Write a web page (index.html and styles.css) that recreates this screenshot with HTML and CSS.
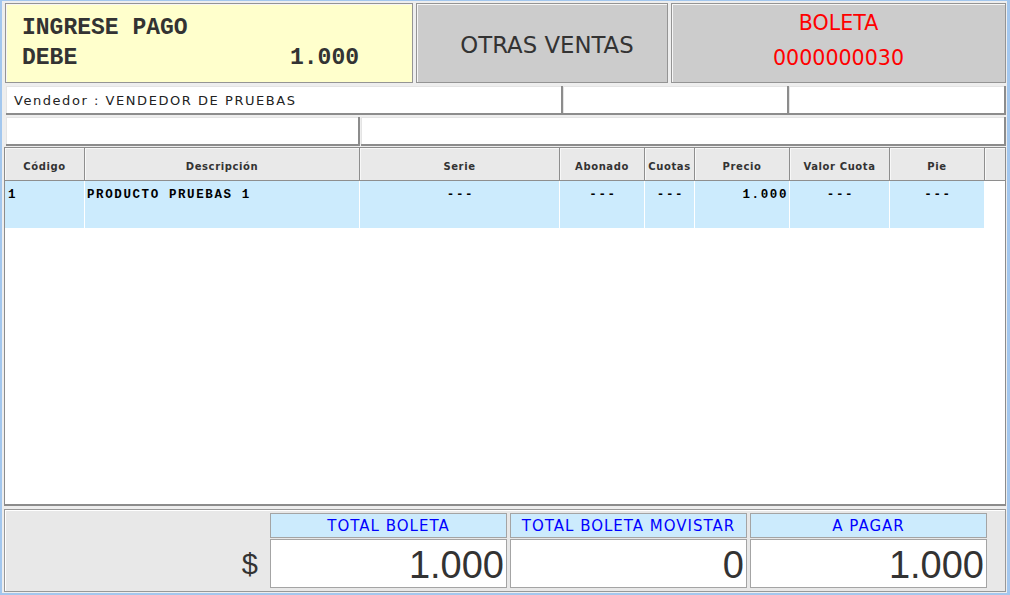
FILE: index.html
```html
<!DOCTYPE html>
<html lang="es">
<head>
<meta charset="utf-8">
<title>Pago</title>
<link rel="stylesheet" href="styles.css">
</head>
<body>
<div class="win">
  <div class="top">
    <div class="panel pay">
      <div class="pay-line">INGRESE PAGO</div>
      <div class="pay-line pay-debe"><span>DEBE</span><span>1.000</span></div>
    </div>
    <div class="panel other">OTRAS VENTAS</div>
    <div class="panel doc">
      <div class="doc-line">BOLETA</div>
      <div class="doc-line">0000000030</div>
    </div>
  </div>

  <div class="row">
    <div class="field f-vend">Vendedor : VENDEDOR DE PRUEBAS</div>
    <div class="field f-mid"></div>
    <div class="field f-grow"></div>
  </div>
  <div class="row row3">
    <div class="field f-left"></div>
    <div class="field f-grow"></div>
  </div>

  <div class="table">
    <div class="thead">
      <div class="th">Código</div>
      <div class="th">Descripción</div>
      <div class="th">Serie</div>
      <div class="th">Abonado</div>
      <div class="th">Cuotas</div>
      <div class="th">Precio</div>
      <div class="th">Valor Cuota</div>
      <div class="th">Pie</div>
      <div class="th th-fill"></div>
    </div>
    <div class="trow">
      <div class="td left">1</div>
      <div class="td desc">PRODUCTO PRUEBAS 1</div>
      <div class="td center">---</div>
      <div class="td center">---</div>
      <div class="td center">---</div>
      <div class="td right">1.000</div>
      <div class="td center">---</div>
      <div class="td center">---</div>
    </div>
  </div>

  <div class="totals">
    <div class="dollar">$</div>
    <div class="tot">
      <div class="tot-label">TOTAL BOLETA</div>
      <div class="tot-value">1.000</div>
    </div>
    <div class="tot">
      <div class="tot-label">TOTAL BOLETA MOVISTAR</div>
      <div class="tot-value">0</div>
    </div>
    <div class="tot">
      <div class="tot-label">A PAGAR</div>
      <div class="tot-value">1.000</div>
    </div>
  </div>
</div>
</body>
</html>
```

FILE: styles.css
```css
* { box-sizing: border-box; }
html, body { margin: 0; padding: 0; }
body {
  width: 1010px;
  height: 595px;
  overflow: hidden;
  font-family: "DejaVu Sans", "Liberation Sans", sans-serif;
  background: #eeeeee;
}
.win {
  width: 1010px;
  height: 595px;
  background: #eeeeee;
  border-top: 1px solid #a3c7ee;
  border-left: 2px solid #a3c7ee;
  border-right: 3px solid #a3c7ee;
  border-bottom: 2px solid #a3c7ee;
  padding: 0 1px 0 2px;
  display: flex;
  flex-direction: column;
}

/* top panels */
.top {
  margin-top: 2px;
  margin-left: 1px;
  height: 80px;
  display: flex;
  gap: 3px;
}
.panel {
  border: 1px solid #949494;
  box-shadow: inset 1px 1px 0 #f6f6f6;
}
.pay {
  width: 408px;
  background: #ffffcc;
  padding: 9px 53px 0 16px;
  font-family: "Liberation Mono", "Courier New", monospace;
  font-weight: bold;
  font-size: 23px;
  line-height: 30px;
  color: #333333;
}
.pay-debe {
  display: flex;
  justify-content: space-between;
}
.other {
  width: 252px;
  background: #cccccc;
  display: flex;
  align-items: center;
  justify-content: center;
  padding: 3px 0 0 10px;
  font-size: 22.8px;
  color: #333333;
}
.doc {
  flex: 1;
  background: #cccccc;
  padding-top: 2px;
  text-align: center;
  font-size: 20.6px;
  line-height: 35px;
  color: #ff0000;
}

/* field rows */
.row {
  margin-top: 3px;
  margin-left: 2px;
  height: 29px;
  display: flex;
}
.row3 { margin-top: 2px; }
.field {
  background: #ffffff;
  border-right: 2px solid #8c8c8c;
  border-bottom: 2px solid #8c8c8c;
  box-shadow: inset 1px 1px 0 #e4e4e4;
}
.f-vend {
  width: 557px;
  padding: 1px 0 0 8px;
  font-size: 13px;
  line-height: 27px;
  letter-spacing: 1.55px;
  color: #222222;
  white-space: nowrap;
}
.f-mid { width: 226px; }
.f-left { width: 354px; margin-right: 1px; }
.f-grow { flex: 1; }

/* table */
.table {
  margin-top: 1px;
  height: 359px;
  background: #ffffff;
  border: 1px solid #8c8c8c;
  border-bottom-width: 2px;
}
.thead, .trow {
  display: grid;
  grid-template-columns: 80px 275px 200px 85px 50px 95px 100px 95px 20px;
}
.th {
  height: 33px;
  background: #e9e9e9;
  border-right: 1px solid #8e8e8e;
  border-bottom: 1px solid #8e8e8e;
  box-shadow: inset 1px 1px 0 #f8f8f8;
  padding-top: 13px;
  text-align: center;
  font-size: 10px;
  font-weight: bold;
  line-height: 12px;
  letter-spacing: 0.6px;
  color: #333333;
  white-space: nowrap;
}
.th-fill { border-right: none; }
.trow {
  grid-template-columns: 80px 275px 200px 85px 50px 95px 100px 95px;
  width: 980px;
}
.td {
  height: 47px;
  background: #ccebfd;
  border-right: 1px solid #ffffff;
  padding-top: 7px;
  font-family: "Liberation Mono", "Courier New", monospace;
  font-weight: bold;
  font-size: 12.5px;
  line-height: 14px;
  letter-spacing: 1.6px;
  color: #000000;
  white-space: nowrap;
}
.td.left { padding-left: 3px; }
.td.desc { padding-left: 2px; }
.td.center { text-align: center; padding-left: 2px; }
.td.right { text-align: right; padding-right: 1px; }

/* totals */
.totals {
  margin-top: 3px;
  height: 83px;
  background: #e8e8e8;
  border: 1px solid #989898;
  box-shadow: inset 1px 1px 0 #ffffff;
  padding: 3px 18px 0 0;
  display: flex;
  gap: 3px;
}
.dollar {
  flex: 1;
  text-align: right;
  padding: 29px 9px 0 0;
  font-family: "Liberation Sans", Arial, sans-serif;
  font-size: 29px;
  line-height: 44px;
  color: #333333;
}
.tot {
  width: 237px;
  display: flex;
  flex-direction: column;
  gap: 1px;
}
.tot-label {
  height: 25px;
  background: #ccebfd;
  border: 1px solid #a4a4a4;
  padding-top: 1px;
  text-align: center;
  font-size: 15px;
  line-height: 22px;
  letter-spacing: 1px;
  color: #0000ff;
  white-space: nowrap;
}
.tot-value {
  height: 49px;
  background: #ffffff;
  border: 1px solid #a4a4a4;
  padding: 3px 2px 0 0;
  text-align: right;
  font-family: "Liberation Sans", Arial, sans-serif;
  font-size: 38px;
  line-height: 44px;
  color: #333333;
}
```
